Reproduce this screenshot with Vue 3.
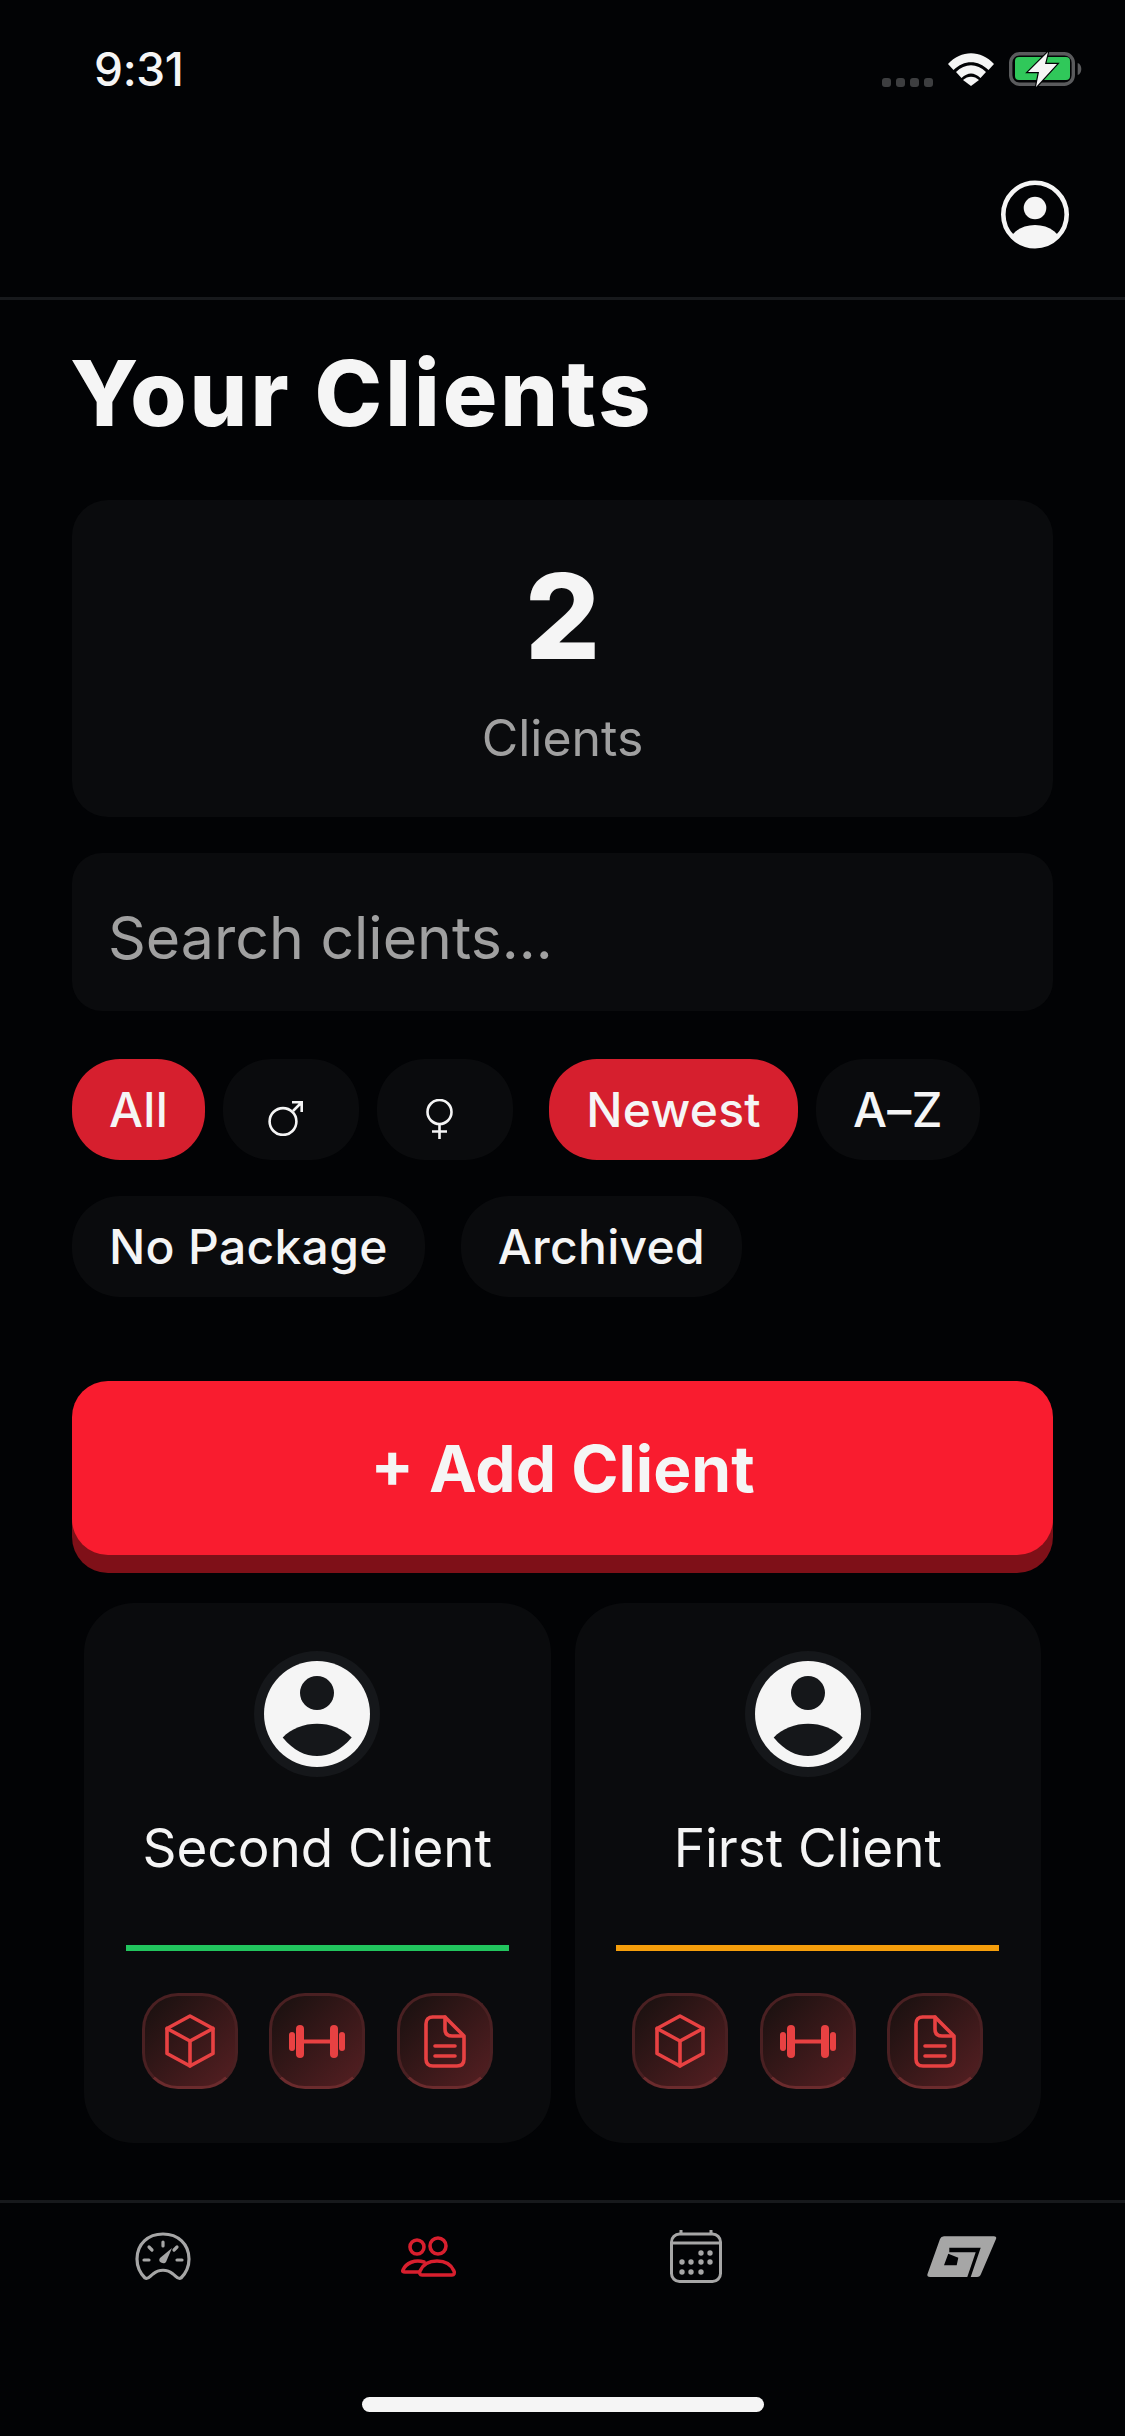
<template>
  <div class="screen">
    <!-- status bar -->
    <div class="status">
      <span class="time">9:31</span>
      <div class="status-icons">
        <div class="dots"><i></i><i></i><i></i><i></i></div>
        <svg width="46" height="33" viewBox="0 0 46 33">
          <path d="M0 11 C13 -3.500 33 -3.500 46 11 L40.500 17 C30 6.500 16 6.500 5.500 17 Z" fill="#f5f5f5"/>
          <path d="M8 19 C17 10 29 10 38 19 L32.500 25 C26 19 20 19 13.500 25 Z" fill="#f5f5f5"/>
          <path d="M15 27 C19.500 22.500 26.500 22.500 31 27 L23 33 Z" fill="#f5f5f5"/>
        </svg>
        <svg class="battery" width="73" height="35" viewBox="0 0 73 35">
          <rect x="1.700" y="1.700" width="62.600" height="30.600" rx="9" fill="none" stroke="#5a5b5d" stroke-width="3.400"/>
          <rect x="6" y="5" width="55" height="23" rx="4" fill="#30c85a"/>
          <path d="M68.700 11 C73.500 12 73.500 22 68.700 23 Z" fill="#5a5b5d"/>
          <path d="M39 0 L19 20 H30 L27 35 L48 12 H36 Z" fill="#f5f5f5" stroke="#020305" stroke-width="2.400" paint-order="stroke"/>
        </svg>
      </div>
    </div>

    <!-- header -->
    <header class="topbar">
      <svg width="68" height="69" viewBox="0 0 68 69">
        <defs>
          <clipPath id="prof"><circle cx="34" cy="34.500" r="33"/></clipPath>
        </defs>
        <circle cx="34" cy="34.500" r="31.700" fill="none" stroke="#f5f5f5" stroke-width="4.600"/>
        <circle cx="34" cy="28" r="11.300" fill="#f5f5f5"/>
        <ellipse cx="34" cy="66" rx="27" ry="21" fill="#f5f5f5" clip-path="url(#prof)"/>
      </svg>
    </header>

    <main class="content">
      <h1 class="title">Your Clients</h1>

      <section class="stat">
        <div class="stat-num">2</div>
        <div class="stat-label">Clients</div>
      </section>

      <div class="search">Search clients...</div>

      <div class="filters">
        <div class="group">
          <span class="chip active">All</span>
          <span class="chip icon">
            <svg width="35" height="35" viewBox="0 0 35 35" fill="none" stroke="#f5f5f5" stroke-width="2.600">
              <circle cx="15" cy="20.500" r="13.400"/>
              <path d="M25 10 L34 1 M24 1.300 H33.700 V11"/>
            </svg>
          </span>
          <span class="chip icon">
            <svg width="27" height="40" viewBox="0 0 27 40" fill="none" stroke="#f5f5f5" stroke-width="2.600">
              <circle cx="13.500" cy="13" r="12"/>
              <path d="M13.500 25 V40 M6 32.500 H21"/>
            </svg>
          </span>
        </div>
        <div class="group">
          <span class="chip active">Newest</span>
          <span class="chip">A–Z</span>
        </div>
        <div class="group">
          <span class="chip">No Package</span>
        </div>
        <div class="group">
          <span class="chip">Archived</span>
        </div>
      </div>

      <button class="add">+ Add Client</button>

      <div class="cards">
        <div v-for="client in clients" :key="client.name" class="card">
          <div class="avatar">
            <svg width="106" height="106" viewBox="0 0 106 106">
              <circle cx="53" cy="53" r="53" fill="#f5f5f5"/>
              <circle cx="53" cy="32" r="17" fill="#15171a"/>
              <path d="M18.700 76.500 C36 58 70 58 87.700 76.500 C76 90 65 95 53 95 C41 95 30 90 18.700 76.500 Z" fill="#15171a"/>
            </svg>
          </div>
          <div class="name">{{ client.name }}</div>
          <div class="bar" :style="{ background: client.color }"></div>
          <div class="actions">
            <span class="act">
              <svg width="50" height="54" viewBox="0 0 50 54" fill="none" stroke="#e84142" stroke-width="3.600" stroke-linejoin="round" stroke-linecap="round">
                <path d="M25 2 L48 14.500 V39.500 L25 52 L2 39.500 V14.500 Z"/>
                <path d="M2 14.500 L25 27 L48 14.500 M25 27 V52"/>
              </svg>
            </span>
            <span class="act">
              <svg width="56" height="33" viewBox="0 0 56 33" fill="#e84142">
                <rect x="0" y="7" width="6" height="19" rx="3"/>
                <rect x="7" y="0" width="8" height="33" rx="4"/>
                <rect x="41" y="0" width="8" height="33" rx="4"/>
                <rect x="50" y="7" width="6" height="19" rx="3"/>
                <rect x="15" y="14.500" width="26" height="4"/>
              </svg>
            </span>
            <span class="act">
              <svg width="42" height="53" viewBox="0 0 42 53" fill="none" stroke="#e84142" stroke-width="3.600" stroke-linejoin="round" stroke-linecap="round">
                <path d="M8 2 H21 L40 21 V44 Q40 51 33 51 H9 Q2 51 2 44 V9 Q2 2 9 2 Z"/>
                <path d="M21 2 V14 Q21 21 28 21 H39"/>
                <path d="M11 31 H31 M11 41 H31"/>
              </svg>
            </span>
          </div>
        </div>
      </div>
    </main>

    <!-- bottom nav -->
    <nav class="tabs">
      <svg width="56" height="49" viewBox="0 0 56 49" fill="none" stroke="#a6a6a6" stroke-width="3.200" stroke-linecap="round">
        <path d="M10 46 C5 41 2 34 2 27 C2 12 13 2 28 2 C43 2 54 12 54 27 C54 34 51 41 46 46 C43 48 41 44 38 42 C32 37 24 37 18 42 C15 44 13 48 10 46 Z"/>
        <path d="M28 10 V14 M14 15 L17 18 M42 15 L39 18 M9 28 H14 M42 28 H47"/>
        <path d="M25 26 L37 16 L31 30 C29 33 22 30 25 26 Z" fill="#a6a6a6" stroke="none"/>
      </svg>
      <svg width="56" height="41" viewBox="0 0 56 41" fill="none" stroke="#d81f2e" stroke-width="3.600" stroke-linecap="round">
        <circle cx="16" cy="11" r="7"/>
        <circle cx="37" cy="10" r="8"/>
        <path d="M23 26 C14 23 5 27 2 34 Q1 36 4 36 H18"/>
        <path d="M21 39 C19 39 18 37 19 35 C22 28 29 25 36 25 C43 25 50 28 53 35 C54 37 53 39 51 39 Z"/>
      </svg>
      <svg width="52" height="53" viewBox="0 0 52 53" fill="none" stroke="#a6a6a6" stroke-width="3">
        <rect x="1.500" y="4" width="49" height="47.500" rx="8"/>
        <path d="M1.500 13 H50.500 M11 0 V4 M41 0 V4"/>
        <g fill="#a6a6a6" stroke="none">
          <circle cx="31" cy="23" r="2.700"/><circle cx="40" cy="23" r="2.700"/>
          <circle cx="12" cy="32" r="2.700"/><circle cx="21" cy="32" r="2.700"/><circle cx="31" cy="32" r="2.700"/><circle cx="40" cy="32" r="2.700"/>
          <circle cx="12" cy="42" r="2.700"/><circle cx="21" cy="42" r="2.700"/><circle cx="31" cy="42" r="2.700"/>
        </g>
      </svg>
      <svg width="70" height="41" viewBox="0 0 70 41">
        <path fill-rule="evenodd" fill="#a6a6a6" d="M13 3 Q14 0.300 17 0.300 H67 Q70 0.300 69 3 L54 38 Q53 41 50 41 H3 Q-0.500 41 0.500 38 Z M22.300 11.700 H53.700 L43.700 41 H40.300 L48.700 16.300 H22.300 Z M21.300 17.700 L31.300 21.700 L29.700 29.300 H17 Z"/>
      </svg>
    </nav>
    <div class="home"><span></span></div>
  </div>
</template>

<script setup>
const clients = [
  { name: 'Second Client', color: '#22c55e' },
  { name: 'First Client', color: '#f59e0b' },
];
</script>

<style>
html, body {
  margin: 0;
  background: #020305;
}
</style>

<style scoped>
.screen {
  width: 1125px;
  height: 2436px;
  background: #020305;
  display: flex;
  flex-direction: column;
  color: #f5f5f5;
  font-family: Inter, "Liberation Sans", sans-serif;
  overflow: hidden;
}

.status {
  height: 138px;
  padding: 0 43px 0 94px;
  display: flex;
  justify-content: space-between;
  align-items: center;
  box-sizing: border-box;
}
.time {
  font-size: 46px;
  font-weight: 500;
  letter-spacing: -0.300px;
}
.status-icons {
  display: flex;
  align-items: center;
  gap: 15px;
}
.battery {
  overflow: visible;
}
.dots {
  display: flex;
  gap: 5px;
  align-self: flex-end;
}
.dots i {
  width: 9px;
  height: 9px;
  border-radius: 3px;
  background: #3d3e40;
}

.topbar {
  height: 162px;
  box-sizing: border-box;
  border-bottom: 3px solid #17191c;
  display: flex;
  justify-content: flex-end;
  align-items: flex-start;
  padding: 42px 56px 0 0;
}

.content {
  flex: 1;
  padding: 0 72px;
}
.title {
  margin: 48px 0 62px -2px;
  font-size: 91px;
  font-weight: 800;
  line-height: 90px;
  letter-spacing: 3px;
}

.stat {
  height: 317px;
  border-radius: 36px;
  background: #0a0b0d;
  display: flex;
  flex-direction: column;
  align-items: center;
  padding-top: 56px;
  box-sizing: border-box;
}
.stat-num {
  font-size: 118px;
  font-weight: 800;
  line-height: 120px;
}
.stat-label {
  margin-top: 32px;
  font-size: 50px;
  color: #a0a0a0;
  line-height: 60px;
}

.search {
  margin-top: 36px;
  height: 158px;
  box-sizing: border-box;
  border-radius: 30px;
  background: #0a0b0d;
  color: #a0a0a0;
  font-size: 59px;
  line-height: 146px;
  padding: 12px 0 0 36px;
}

.filters {
  margin-top: 48px;
  display: flex;
  flex-wrap: wrap;
  gap: 36px;
}
.group {
  display: flex;
  gap: 18px;
}
.chip {
  height: 101px;
  padding: 0 37px;
  border-radius: 48px;
  background: #0a0b0d;
  font-size: 48px;
  font-weight: 500;
  letter-spacing: 0.300px;
  display: flex;
  align-items: center;
  box-sizing: border-box;
}
.chip.active {
  background: #d61f2e;
}
.chip.icon {
  width: 136px;
  padding: 18px 12px 0 0;
  justify-content: center;
}

.add {
  display: block;
  width: 100%;
  margin-top: 84px;
  height: 174px;
  border: none;
  border-radius: 36px;
  background: #f91c2f;
  box-shadow: 0 18px 0 #7f1018;
  color: #f5f5f5;
  font-family: inherit;
  font-size: 64px;
  font-weight: 700;
}

.cards {
  margin: 48px 12px 0;
  display: flex;
  gap: 24px;
}
.card {
  flex: 1;
  height: 540px;
  box-sizing: border-box;
  border-radius: 50px;
  background: #0a0b0d;
  display: flex;
  flex-direction: column;
  align-items: center;
  padding-top: 48px;
}
.avatar {
  width: 126px;
  height: 126px;
  border-radius: 50%;
  background: #15171a;
  display: flex;
  align-items: center;
  justify-content: center;
}
.name {
  margin-top: 39px;
  font-size: 53px;
  line-height: 64px;
}
.bar {
  margin-top: 65px;
  width: 383px;
  height: 6px;
}
.actions {
  margin-top: 42px;
  display: flex;
  gap: 31.500px;
}
.act {
  width: 96px;
  height: 96px;
  box-sizing: border-box;
  border-radius: 36px;
  border: 3px solid #4a2022;
  border-bottom-color: #6b2b2d;
  background: linear-gradient(135deg, #17100f, #551f22);
  display: flex;
  align-items: center;
  justify-content: center;
}

.tabs {
  height: 130px;
  box-sizing: border-box;
  border-top: 3px solid #17191c;
  display: grid;
  grid-template-columns: repeat(4, 1fr);
  justify-items: center;
  align-items: center;
  padding: 0 30px 20px;
}
.home {
  height: 106px;
  display: flex;
  justify-content: center;
}
.home span {
  margin-top: 67px;
  width: 402px;
  height: 15px;
  border-radius: 8px;
  background: #f5f5f5;
}
</style>
